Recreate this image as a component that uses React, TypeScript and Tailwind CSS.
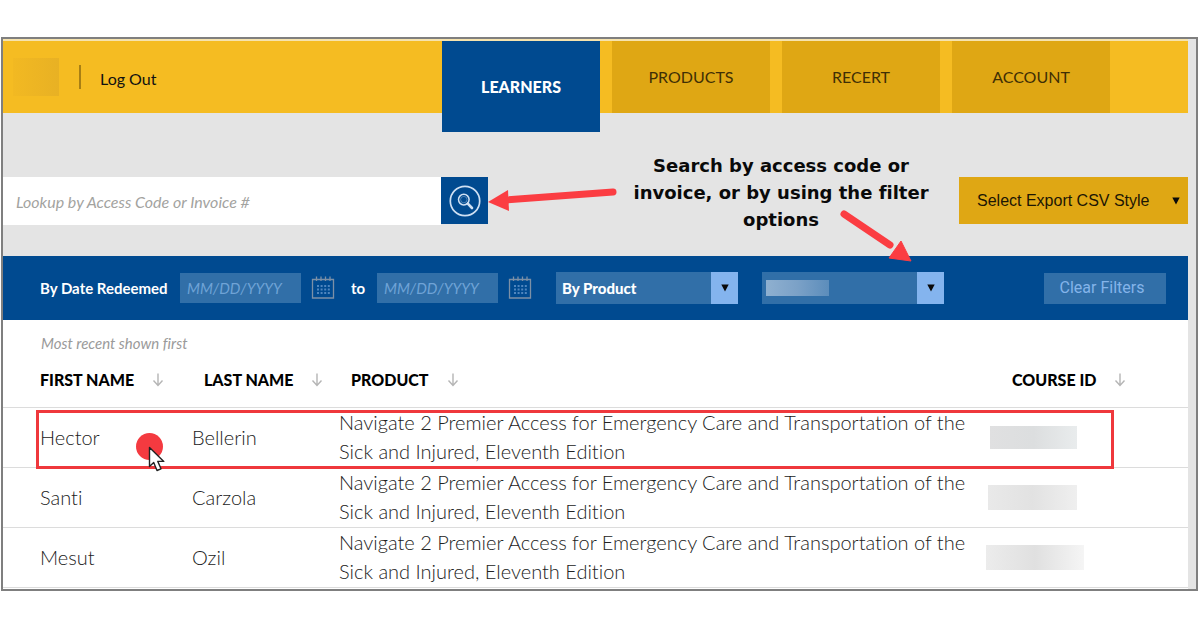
import type { ReactNode } from "react";

const learners = [
  { first: "Hector", last: "Bellerin", courseId: "ml-1 h-[23px] w-[87px] bg-linear-to-r from-[#e0e0e1] via-[#dcdedf] to-[#e9eced]" },
  { first: "Santi", last: "Carzola", courseId: "ml-[2px] h-[25px] w-[89px] bg-linear-to-r from-[#e9e9e9] via-[#e2e2e2] to-[#efefef]" },
  { first: "Mesut", last: "Ozil", courseId: "h-[25px] w-[98px] bg-linear-to-r from-[#ececec] via-[#e0e0e0] to-[#f5f5f5]" },
];

const product =
  "Navigate 2 Premier Access for Emergency Care and Transportation of the Sick and Injured, Eleventh Edition";

function SearchIcon() {
  return (
    <svg className="size-8" viewBox="0 0 32 32" fill="none" stroke="#cfe0f3" aria-hidden="true">
      <circle cx="16" cy="16" r="14.7" strokeWidth="1.7" />
      <circle cx="14.8" cy="14.6" r="5.3" strokeWidth="1.5" />
      <circle cx="14.8" cy="14.6" r="3.2" strokeWidth="0.7" opacity="0.5" />
      <path d="M18.8 18.6l4.2 4.4" strokeWidth="2.6" strokeLinecap="round" />
    </svg>
  );
}

function CalendarIcon() {
  return (
    <svg className="h-6 w-6 shrink-0" viewBox="0 0 24 24" fill="none" stroke="#7c90a6" aria-hidden="true">
      <path d="M1.5 3.500h21v18.500h-21z" strokeWidth="1.3" />
      <path d="M5.5 0.500v4.500M10 0.500v4.500M14.5 0.500v4.500M19 0.500v4.500" strokeWidth="1.300" />
      <path d="M6 10h13M6 13.500h13M6 17h13" stroke="#4f86bf" strokeWidth="2" strokeDasharray="2 1.6" />
    </svg>
  );
}

function SortArrow() {
  return (
    <svg className="h-[14px] w-3" viewBox="0 0 12 14" fill="none" stroke="#b5b5b5" strokeWidth="1.4" aria-hidden="true">
      <path d="M6 0.500v12M1.5 7.5L6 12.5l4.500-5" />
    </svg>
  );
}

function Caret() {
  return (
    <svg className="h-2 w-2" viewBox="0 0 8 8" fill="#0a0a0a" aria-hidden="true">
      <path d="M0.300 0.500h7.400L4 7.600z" />
    </svg>
  );
}

function Heading({ children, className }: { children: ReactNode; className: string }) {
  return (
    <th scope="col" className={`p-0 text-left ${className}`}>
      <button type="button" className="flex items-center gap-[18px] text-[16px] font-black leading-5">
        {children}
        <SortArrow />
      </button>
    </th>
  );
}

function FilterSelect({ label, children, redacted }: { label: string; children: ReactNode; redacted?: boolean }) {
  return (
    <div className="relative w-[182px]">
      <select
        aria-label={label}
        className="h-8 w-full appearance-none bg-[#316fa8] pl-[6px] text-[15px] font-black text-white"
      >
        {children}
      </select>
      {redacted && (
        <span className="absolute left-1 top-2 h-4 w-[63px] bg-linear-to-r from-[#8fb0d0] via-[#7ba1c7] to-[#5c8dbb]" />
      )}
      <span className="pointer-events-none absolute inset-y-0 right-0 flex w-[27px] items-center justify-center bg-[#84b4ee]">
        <Caret />
      </span>
    </div>
  );
}

function DateField({ label }: { label: string }) {
  return (
    <input
      aria-label={label}
      placeholder="MM/DD/YYYY"
      className="h-[30px] w-[121px] bg-[#316fa8] px-[7px] text-[15px] italic text-white placeholder:text-[#6fa3d6]"
    />
  );
}

export default function App() {
  return (
    <div className="min-h-screen bg-white px-px pt-[37px] font-['Lato',sans-serif] text-[#111] [font-variant-ligatures:none]">
      <div className="mr-px border-2 border-[#7f7f7f] bg-[#e4e4e4] pr-2">
        <header className="flex h-[74px] items-start border-t-2 border-[#f6e3ae] bg-[#f5bc22]">
          <div className="flex h-full items-center pb-px">
            <span className="ml-[10px] h-[38px] w-[46px] bg-linear-to-r from-[#f2b922] to-[#e8b124]" />
            <span className="ml-5 h-6 w-[2px] bg-[#a87f14]" />
            <a href="#logout" className="ml-[19px] pt-1 text-[16px] leading-5">Log Out</a>
          </div>
          <nav className="ml-auto mr-[78px] flex gap-3 text-[16px] text-[#3f2f05]">
            <a
              href="#learners"
              aria-current="page"
              className="flex h-[91px] w-[158px] items-center justify-center bg-[#004a90] font-black text-white"
            >
              LEARNERS
            </a>
            <a href="#products" className="flex h-[72px] w-[158px] items-center justify-center bg-[#dfa714]">PRODUCTS</a>
            <a href="#recert" className="flex h-[72px] w-[158px] items-center justify-center bg-[#dfa714]">RECERT</a>
            <a href="#account" className="flex h-[72px] w-[158px] items-center justify-center bg-[#dfa714]">ACCOUNT</a>
          </nav>
        </header>

        <section className="flex items-start pb-[23px] pt-[39px]">
          <form className="mt-[25px] flex" role="search">
            <input
              aria-label="Lookup by Access Code or Invoice #"
              placeholder="Lookup by Access Code or Invoice #"
              className="h-12 w-[438px] bg-white px-[13px] text-[16px] italic placeholder:text-[#a3a39f]"
            />
            <button
              type="submit"
              aria-label="Search"
              className="flex h-[47px] w-[47px] items-center justify-center bg-[#004a90]"
            >
              <SearchIcon />
            </button>
          </form>
          <div className="relative ml-[143px] w-[300px]">
            <p className="text-center font-['DejaVu_Sans',sans-serif] text-[18px] font-bold leading-[27px] text-[#0a0a0a]">
              Search by access code or invoice, or by using the filter options
            </p>
            <svg
              className="pointer-events-none absolute -left-[143px] top-0 h-[114px] w-[424px]"
              viewBox="0 0 424 114"
              fill="#fb3d42"
              stroke="#fb3d42"
              aria-hidden="true"
            >
              <path d="M18 48L125 40" strokeWidth="7" strokeLinecap="round" />
              <path d="M0 50L20 38L21 59z" stroke="none" />
              <path d="M356 62L402 93" strokeWidth="7" strokeLinecap="round" />
              <path d="M423 109L401 106L413 89z" strokeWidth="1" />
            </svg>
          </div>
          <div className="relative ml-auto mt-[25px] w-[229px]">
            <select
              aria-label="Select Export CSV Style"
              className="h-[47px] w-full appearance-none bg-[#dfa714] pl-[18px] font-['Liberation_Sans',sans-serif] text-[16px] text-[#1c1604]"
            >
              <option>Select Export CSV Style</option>
            </select>
            <span className="pointer-events-none absolute inset-y-0 right-2 flex items-center">
              <Caret />
            </span>
          </div>
        </section>

        <section className="flex h-16 items-center bg-[#004a90] pl-[37px] pr-[22px] text-white">
          <span className="w-[140px] text-[15px] font-bold">By Date Redeemed</span>
          <DateField label="Redeemed from" />
          <span className="ml-[10px] flex"><CalendarIcon /></span>
          <span className="w-[42px] pl-4 text-[15px] font-bold">to</span>
          <DateField label="Redeemed to" />
          <span className="ml-[10px] flex"><CalendarIcon /></span>
          <div className="ml-6 flex gap-6">
            <FilterSelect label="Product filter">
              <option>By Product</option>
            </FilterSelect>
            <FilterSelect label="Status filter" redacted>
              <option value=""></option>
            </FilterSelect>
          </div>
          <button
            type="button"
            className="ml-auto h-[31px] w-[122px] bg-[#316fa8] pr-[6px] font-['Roboto',sans-serif] text-[16px] text-[#84b4ea]"
          >
            Clear Filters
          </button>
        </section>

        <section className="relative bg-white pb-px pt-3">
          <p className="pl-[38px] text-[15px] italic leading-[22px] text-[#9a9a9a]">Most recent shown first</p>
          <table className="w-full table-fixed border-collapse text-[20px] font-light leading-[29px] text-[#222]">
            <colgroup>
              <col className="w-[189px]" />
              <col className="w-[147px]" />
              <col />
              <col className="w-[202px]" />
            </colgroup>
            <thead>
              <tr className="h-[53px] border-b border-[#dcdcdc] text-black">
                <Heading className="pl-[37px]">FIRST NAME</Heading>
                <Heading className="pl-3">LAST NAME</Heading>
                <Heading className="pl-3">PRODUCT</Heading>
                <Heading className="pl-[26px]">COURSE ID</Heading>
              </tr>
            </thead>
            <tbody>
              {learners.map((learner) => (
                <tr key={learner.first} className="border-b border-[#dcdcdc]">
                  <td className="p-0 pl-[37px]">{learner.first}</td>
                  <td className="p-0">{learner.last}</td>
                  <td className="p-0 pb-px pr-2">{product}</td>
                  <td className="p-0"><div className={learner.courseId} /></td>
                </tr>
              ))}
            </tbody>
          </table>
          <div className="pointer-events-none absolute left-[33px] right-[74px] top-[90px] h-[59px] border-[3px] border-[#ef383c]" />
          <svg
            className="pointer-events-none absolute left-[132px] top-[112px] h-10 w-[30px]"
            viewBox="0 0 30 40"
            aria-hidden="true"
          >
            <circle cx="14.500" cy="14.500" r="13.500" fill="#f43a40" />
            <path
              d="M14.500 15.500V34.500L18.700 30.600L22 38.500L26 36.800L22.800 29.400H28.800z"
              fill="#fff"
              stroke="#222"
              strokeWidth="1.400"
              strokeLinejoin="round"
            />
          </svg>
        </section>
      </div>
    </div>
  );
}
